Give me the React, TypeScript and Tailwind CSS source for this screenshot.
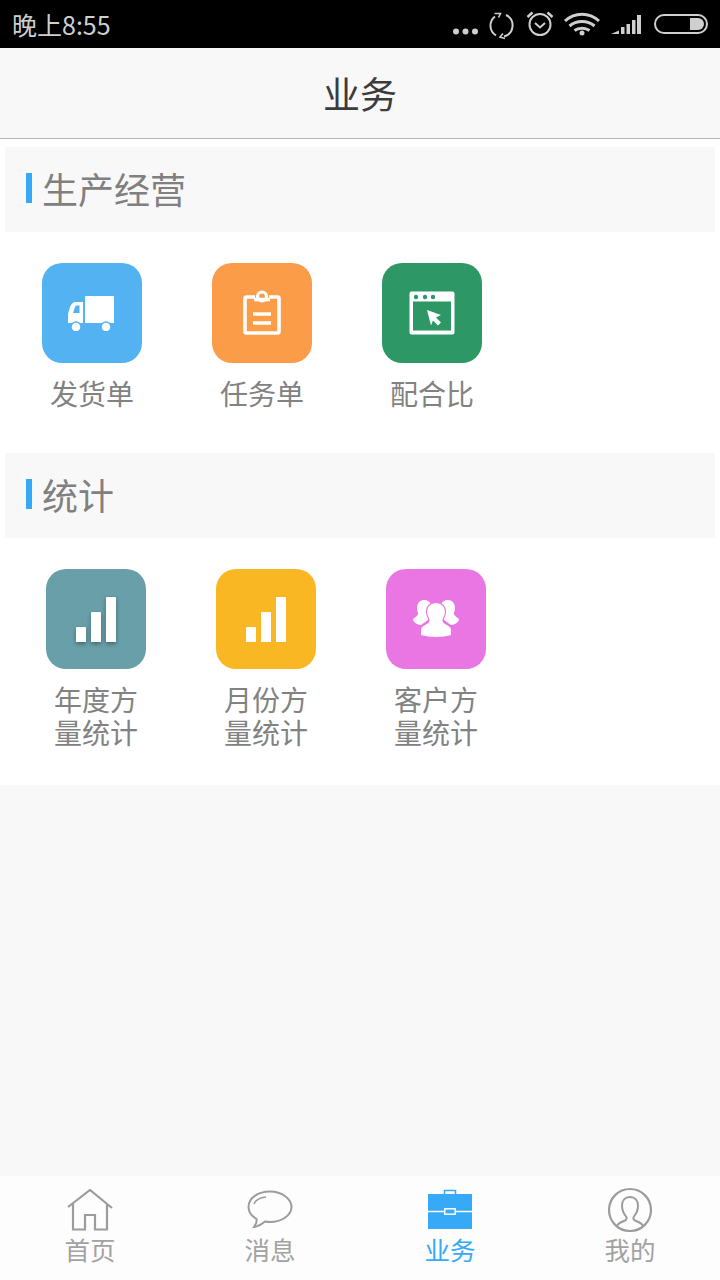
const font = { fontFamily: '"Noto Sans CJK SC", "Noto Sans", sans-serif' };

function StatusBar() {
  return (
    <div className="flex h-12 items-center justify-between bg-black pl-3 pr-3 text-[#cfcfcf]">
      <span className="text-[25px] leading-none">晚上8:55</span>
      <div className="flex items-center">
        <svg width="268" height="48" viewBox="0 0 268 48" className="-mr-[11px]" fill="none" stroke="#cfcfcf">
          {/* dots */}
          <g fill="#cfcfcf" stroke="none">
            <circle cx="5" cy="31.5" r="3" />
            <circle cx="14.5" cy="31.5" r="3" />
            <circle cx="24" cy="31.5" r="3" />
          </g>
          {/* sync */}
          <path d="M44 16.500a11.500 11.500 0 0 0 1 19" strokeWidth="2" />
          <path d="M55 15a11.500 11.500 0 0 1-2 21.500" strokeWidth="2" />
          <path d="M43.500 13.500h6l-2 4M54 38.500l-5-1.500 3-3.500" strokeWidth="1.600" />
          {/* alarm */}
          <circle cx="89" cy="24.500" r="10.500" strokeWidth="2" />
          <path d="M84 23l5 4.500 5-4.500" strokeWidth="2" />
          <path d="M76.500 17l5-4.500M101.500 17l-5-4.500" strokeWidth="2.500" />
          {/* wifi */}
          <path d="M114 21c10-9 24-9 34 0" strokeWidth="3" />
          <path d="M118.500 26c7-6 18-6 25 0" strokeWidth="3" />
          <path d="M123.500 30.500c4-3 11-3 15 0" strokeWidth="3" />
          <circle cx="131" cy="33" r="2.500" fill="#cfcfcf" stroke="none" />
          {/* signal */}
          <g fill="#cfcfcf" stroke="none">
            <path d="M160 34l8-3.500V34z" />
            <rect x="170" y="27" width="3.500" height="7" />
            <rect x="175.500" y="24" width="3.500" height="10" />
            <rect x="181" y="20" width="3.500" height="14" />
            <rect x="186" y="15" width="4" height="19" />
          </g>
          {/* battery */}
          <rect x="204" y="15" width="52" height="18" rx="9" strokeWidth="2" />
          <path d="M239 18h8a6 6 0 0 1 0 12h-8z" fill="#cfcfcf" stroke="none" />
        </svg>
      </div>
    </div>
  );
}

function SectionHead({ title }: { title: string }) {
  return (
    <div className="mx-[5px] flex h-[85px] items-center bg-[#f8f8f8] pl-[21px]">
      <div className="mb-[4px] mr-[10px] h-[30px] w-[6px] bg-[#36a9f7]" />
      <span className="-mt-[3px] text-[36px] leading-none text-[#808080]">{title}</span>
    </div>
  );
}

function Tile({ bg, label, children }: { bg: string; label: string; children: React.ReactNode }) {
  return (
    <div className="flex w-[170px] flex-col items-center">
      <div className={`flex h-[100px] w-[100px] items-center justify-center rounded-[20px] ${bg}`}>{children}</div>
      <div className="mt-[14px] w-[84px] text-center text-[28px] leading-[33px] text-[#828282]">{label}</div>
    </div>
  );
}

function Truck() {
  return (
    <svg width="48" height="36" viewBox="0 0 48 36" fill="#fff">
      <path d="M17 1h29v27H17z" />
      <path d="M15 7H8C5 7 3 9 2 12l-2 7v9h15zM5 18l2-6c.5-1 1-1.500 2-1.500h2.500V18z" fillRule="evenodd" />
      <circle cx="8" cy="32" r="5" stroke="#53b3f2" strokeWidth="1.500" />
      <circle cx="38" cy="32" r="5" stroke="#53b3f2" strokeWidth="1.500" />
    </svg>
  );
}

function Clipboard() {
  return (
    <svg width="38" height="46" viewBox="0 0 38 46" fill="none" stroke="#fff" strokeWidth="3.600">
      <path d="M12 7H3.500A1.500 1.500 0 0 0 2 8.500v33A1.500 1.500 0 0 0 3.500 43h31a1.500 1.500 0 0 0 1.500-1.500v-33A1.500 1.500 0 0 0 34.500 7H26" />
      <path d="M11 9.500h16" />
      <circle cx="19" cy="6.500" r="4.500" strokeWidth="3.200" />
      <path d="M10 24h18M10 33h18" />
    </svg>
  );
}

function BrowserCursor() {
  return (
    <svg width="46" height="44" viewBox="0 0 46 44">
      <rect x="0.500" y="0.500" width="45" height="43" rx="2" fill="#fff" />
      <path d="M4 10.500h38V39.500H4z" fill="#2d9865" />
      <g fill="#2d9865">
        <circle cx="7" cy="6" r="2.200" />
        <circle cx="16" cy="6" r="2.200" />
        <circle cx="24" cy="6" r="2.200" />
      </g>
      <path d="M18 19l14 5-5 2.500 5 5-3 3-5-5-2 5z" fill="#fff" />
    </svg>
  );
}

function Bars({ shadow }: { shadow?: boolean }) {
  return (
    <div className={`flex items-end gap-[5px] ${shadow ? "drop-shadow-[0_2px_2px_rgba(0,0,0,0.35)]" : ""}`}>
      <div className="h-[15px] w-[10px] rounded-t-[1px] bg-white" />
      <div className="h-[30px] w-[10px] rounded-t-[1px] bg-white" />
      <div className="h-[45px] w-[10px] rounded-t-[1px] bg-white" />
    </div>
  );
}

function People() {
  return (
    <svg width="46" height="38" viewBox="0 0 46 38" fill="#fff">
      <path d="M11 0c4 0 7 2.500 8 7v10l-11 8c-2 0-7-2-8-5-.5-1.500 4-3.500 5-5.500.5-1.500-1-3.500-1-6C4 3 7 0 11 0z" />
      <path d="M35 0c-4 0-7 2.500-8 7v10l11 8c2 0 7-2 8-5 .5-1.500-4-3.500-5-5.500-.5-1.500 1-3.500 1-6C42 3 39 0 35 0z" />
      <path d="M23 2.500c6 0 10 4.500 9.500 10-.3 3.500-2 5-2.500 7.500-.3 2 1 3 4 4.500 3 1.500 4.500 2.500 4.500 5v6C33.500 37 28 37.500 23 37.500S12.500 37 7.500 35.500v-6c0-2.500 1.500-3.500 4.500-5 3-1.500 4.300-2.500 4-4.500-.5-2.500-2.200-4-2.500-7.500-.5-5.500 3.500-10 9.500-10z" stroke="#e976e2" strokeWidth="1.200" />
    </svg>
  );
}

function TabItem({ label, active, children }: { label: string; active?: boolean; children: React.ReactNode }) {
  return (
    <div className="flex flex-1 flex-col items-center pt-3">
      <div className="flex h-[44px] w-[46px] items-center justify-center">{children}</div>
      <span className={`mt-[2px] text-[25.500px] leading-[30px] ${active ? "text-[#36a9f7]" : "text-[#a2a2a2]"}`}>{label}</span>
    </div>
  );
}

export default function App() {
  return (
    <div className="flex h-[1280px] w-[720px] flex-col overflow-hidden bg-[#f8f8f8]" style={font}>
      <StatusBar />
      <header className="flex h-[91px] items-center justify-center border-b border-[#b4b4b4] bg-[#f8f8f8]">
        <h1 className="text-[37px] font-normal leading-none text-[#3c3c3c]">业务</h1>
      </header>

      <main className="bg-white pt-2">
        <SectionHead title="生产经营" />
        <div className="flex pb-[43px] pl-[7px] pt-[31px]">
          <Tile bg="bg-[#53b3f2]" label="发货单"><Truck /></Tile>
          <Tile bg="bg-[#fb9c48]" label="任务单"><Clipboard /></Tile>
          <Tile bg="bg-[#2d9865]" label="配合比"><BrowserCursor /></Tile>
        </div>
        <SectionHead title="统计" />
        <div className="flex pb-[36px] pl-[11px] pt-[31px]">
          <Tile bg="bg-[#689fa9]" label="年度方量统计"><Bars shadow /></Tile>
          <Tile bg="bg-[#f9b723]" label="月份方量统计"><Bars /></Tile>
          <Tile bg="bg-[#e976e2]" label="客户方量统计"><People /></Tile>
        </div>
      </main>

      <nav className="mt-auto flex h-[104px] bg-[#fdfdfd]">
        <TabItem label="首页">
          <svg width="46" height="42" viewBox="0 0 46 42" fill="none" stroke="#9c9c9c" strokeWidth="2.200">
            <path d="M1 18L23 1l22 18" />
            <path d="M6 15v25.500h12V26h10v14.500h12V15" />
          </svg>
        </TabItem>
        <TabItem label="消息">
          <svg width="46" height="40" viewBox="0 0 46 40" fill="none" stroke="#9c9c9c" strokeWidth="2">
            <path d="M23 1.500C11 1.500 1.500 8 1.500 17c0 5 3 9 8 12 .5 2.500-1 6-2.500 8 4-.5 8-3 11-5.500 1.500.3 3.300.5 5 .5 12 0 21.500-7 21.500-15S35 1.500 23 1.500z" />
            <path d="M7 14c1-3.500 6-6.500 12-7" strokeWidth="1.500" />
          </svg>
        </TabItem>
        <TabItem label="业务" active>
          <svg width="46" height="44" viewBox="0 0 46 44">
            <rect x="1" y="6" width="44" height="35" fill="#36a9f7" />
            <path d="M17.500 6V2.500h11V6" fill="none" stroke="#36a9f7" strokeWidth="1.500" />
            <path d="M1 23.500h44" stroke="#fff" strokeWidth="1.500" />
            <rect x="17.800" y="20.800" width="10.400" height="5.400" fill="#36a9f7" stroke="#fff" strokeWidth="1.500" />
          </svg>
        </TabItem>
        <TabItem label="我的">
          <svg width="46" height="46" viewBox="0 0 46 46" fill="none" stroke="#9c9c9c" strokeWidth="2">
            <circle cx="23" cy="23" r="21" strokeWidth="2.200" />
            <path d="M10 39c1-3 4-4 8-5.500 2-1 2-2.500 1-4-2-2.500-4-6-4-11 0-5 3-8.500 8-8.500s8 3.500 8 8.500c0 5-2 8.500-4 11-1 1.500-1 3 1 4 4 1.500 7 2.500 8 5.500" />
          </svg>
        </TabItem>
      </nav>
    </div>
  );
}
